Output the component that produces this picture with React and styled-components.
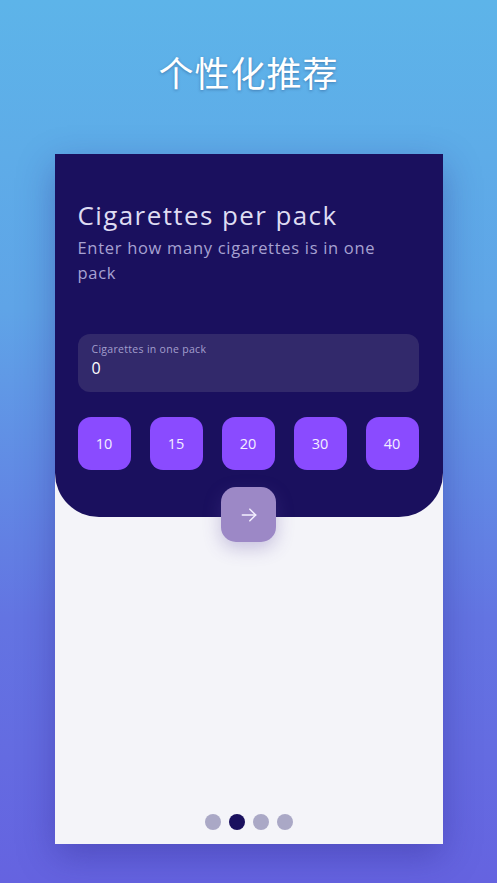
import React from 'react';
import styled, { createGlobalStyle } from 'styled-components';

const GlobalStyle = createGlobalStyle`
    html, body {
        margin: 0;
        padding: 0;
    }
    body {
        font-family: "Open Sans", "Noto Sans", sans-serif;
    }
`;

const Page = styled.div`
    width: 497px;
    height: 883px;
    background: linear-gradient(180deg, #5db4e9 0%, #5fa4e7 35%, #6374e2 70%, #6563e0 100%);
    display: flex;
    flex-direction: column;
    align-items: center;
    overflow: hidden;
`;

const Headline = styled.h1`
    margin: 50px 0 0 0;
    height: 44px;
    line-height: 44px;
    font-family: "Noto Sans CJK SC", "Noto Sans", sans-serif;
    font-size: 35px;
    font-weight: 400;
    color: #ffffff;
    letter-spacing: 1px;
    text-shadow: 0 1px 3px rgba(30, 60, 110, 0.45);
`;

const Screen = styled.div`
    margin-top: 60px;
    width: 388px;
    height: 690px;
    background: #f4f4f9;
    box-shadow: 0 12px 34px rgba(40, 30, 130, 0.35);
    display: flex;
    flex-direction: column;
`;

const Header = styled.div`
    background: #1a105e;
    padding: 45px 24px 47px 23px;
    border-radius: 0 0 44px 44px;
`;

const Title = styled.div`
    font-size: 26px;
    line-height: 32px;
    color: #dedcf2;
    letter-spacing: 1.4px;
`;

const Subtitle = styled.div`
    margin-top: 4px;
    font-size: 16.5px;
    line-height: 25px;
    color: #a7a2d2;
    letter-spacing: 0.7px;
    width: 320px;
`;

const Field = styled.div`
    margin-top: 49px;
    height: 58px;
    box-sizing: border-box;
    padding: 8px 14px;
    background: #32296b;
    border-radius: 12px;
`;

const FieldLabel = styled.div`
    font-size: 10.5px;
    line-height: 14px;
    color: #a39fcd;
    letter-spacing: 0.3px;
`;

const FieldValue = styled.div`
    margin-top: 1px;
    font-size: 16px;
    line-height: 22px;
    color: #ffffff;
`;

const Presets = styled.div`
    margin-top: 25px;
    display: flex;
    justify-content: space-between;
`;

const Preset = styled.button`
    width: 53px;
    height: 53px;
    border: none;
    border-radius: 13px;
    background: #8a4bff;
    color: #f4efff;
    font-family: "Open Sans", "Noto Sans", sans-serif;
    font-size: 14.5px;
    padding: 0;
`;

const NextButton = styled.button`
    align-self: center;
    margin-top: -30px;
    width: 55px;
    height: 55px;
    border: none;
    border-radius: 15px;
    background: #9c88c6;
    box-shadow: 0 6px 18px rgba(90, 70, 160, 0.3);
    display: flex;
    align-items: center;
    justify-content: center;
    padding: 0;
`;

const Spacer = styled.div`
    flex: 1;
`;

const Dots = styled.div`
    display: flex;
    justify-content: center;
    gap: 8px;
    margin-bottom: 14px;
`;

const Dot = styled.span`
    width: 16px;
    height: 16px;
    border-radius: 50%;
    background: ${props => props.active ? '#1a105e' : '#aaa8c6'};
`;

function Arrow() {
    return (
        <svg width="20" height="20" viewBox="0 0 24 24" fill="none" stroke="#f3efff" strokeWidth="1.8" strokeLinecap="round" strokeLinejoin="round">
            <path d="M4 12h16" />
            <path d="M13 5l7 7-7 7" />
        </svg>
    );
}

export default function App() {
    const presets = [10, 15, 20, 30, 40];

    return (
        <Page>
            <GlobalStyle />
            <Headline>个性化推荐</Headline>
            <Screen>
                <Header>
                    <Title>Cigarettes per pack</Title>
                    <Subtitle>Enter how many cigarettes is in one pack</Subtitle>
                    <Field>
                        <FieldLabel>Cigarettes in one pack</FieldLabel>
                        <FieldValue>0</FieldValue>
                    </Field>
                    <Presets>
                        {presets.map(n => <Preset key={n}>{n}</Preset>)}
                    </Presets>
                </Header>
                <NextButton><Arrow /></NextButton>
                <Spacer />
                <Dots>
                    <Dot />
                    <Dot active />
                    <Dot />
                    <Dot />
                </Dots>
            </Screen>
        </Page>
    );
}
